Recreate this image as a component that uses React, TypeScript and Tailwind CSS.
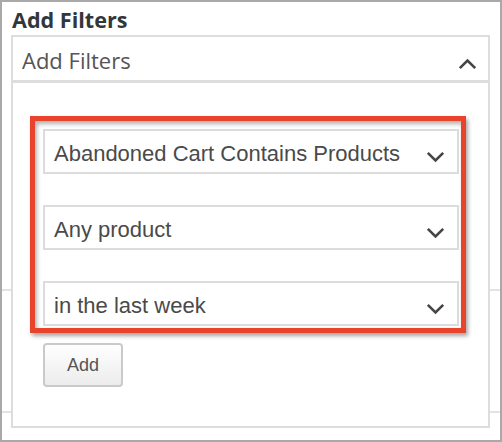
const sans = { fontFamily: '"Liberation Sans", Arial, sans-serif' };
const open = { fontFamily: '"Open Sans", "Noto Sans", sans-serif' };

function ChevronDown() {
  return (
    <svg width="19" height="12" viewBox="0 0 19 12" fill="none" className="mt-[10px] shrink-0" aria-hidden>
      <polyline points="1.8,1.8 9.5,9.5 17.2,1.8" stroke="#454545" strokeWidth="2.6" />
    </svg>
  );
}

function ChevronUp() {
  return (
    <svg width="19" height="12" viewBox="0 0 19 12" fill="none" className="mt-[10px] shrink-0" aria-hidden>
      <polyline points="1.8,10.2 9.5,2.5 17.2,10.2" stroke="#454545" strokeWidth="2.6" />
    </svg>
  );
}

function Select({ label }: { label: string }) {
  return (
    <div className="flex h-[45px] items-center justify-between border-2 border-[#dcdcdc] bg-white pl-[9px] pr-[12px]">
      <span className="pt-[3px] text-[22px] leading-[25px] text-[#4a4a4a]" style={sans}>
        {label}
      </span>
      <ChevronDown />
    </div>
  );
}

export default function App() {
  const filters = ["Abandoned Cart Contains Products", "Any product", "in the last week"];

  return (
    <div className="relative h-[442px] w-[502px] overflow-hidden border-2 border-[#a9a9a9] bg-white">
      <h2 className="pl-[10px] pt-[4px] text-[21.6px] font-bold leading-[28px] text-[#32373c]" style={open}>
        Add Filters
      </h2>

      {/* table rows behind the dropdown */}
      <div className="h-[257px] border-b-2 border-[#e3e3e3]" />
      <div className="h-[122px] border-b-2 border-[#e3e3e3]" />

      <div className="absolute left-[9px] top-[33px] z-10 flex h-[393px] w-[479px] flex-col border-2 border-[#dddddd] bg-white">
        <div className="flex h-[46px] shrink-0 items-start justify-between border-b-[3px] border-[#dddddd] pl-[9px] pr-[11px]">
          <span className="pt-[8px] text-[22px] leading-[30px] text-[#555555]" style={open}>
            Add Filters
          </span>
          <div className="flex h-[43px] items-center">
            <ChevronUp />
          </div>
        </div>

        <div className="flex flex-col items-start pl-[30px] pr-[29px] pt-[46px]">
          <div className="relative flex w-full flex-col gap-[31px]">
            {filters.map((f) => (
              <Select key={f} label={f} />
            ))}
            <div className="pointer-events-none absolute -left-[13px] -top-[13px] -right-[7px] -bottom-[7px] border-[5px] border-[#e9432b] shadow-[2px_3px_4px_rgba(0,0,0,0.35),inset_2px_3px_4px_rgba(0,0,0,0.3)]" />
          </div>

          <button
            className="mt-[17px] flex h-[44px] w-[80px] items-center justify-center rounded-[4px] border-2 border-[#cacaca] bg-gradient-to-b from-white to-[#ececec] text-[18px] text-[#555555]"
            style={sans}
          >
            Add
          </button>
        </div>
      </div>
    </div>
  );
}
